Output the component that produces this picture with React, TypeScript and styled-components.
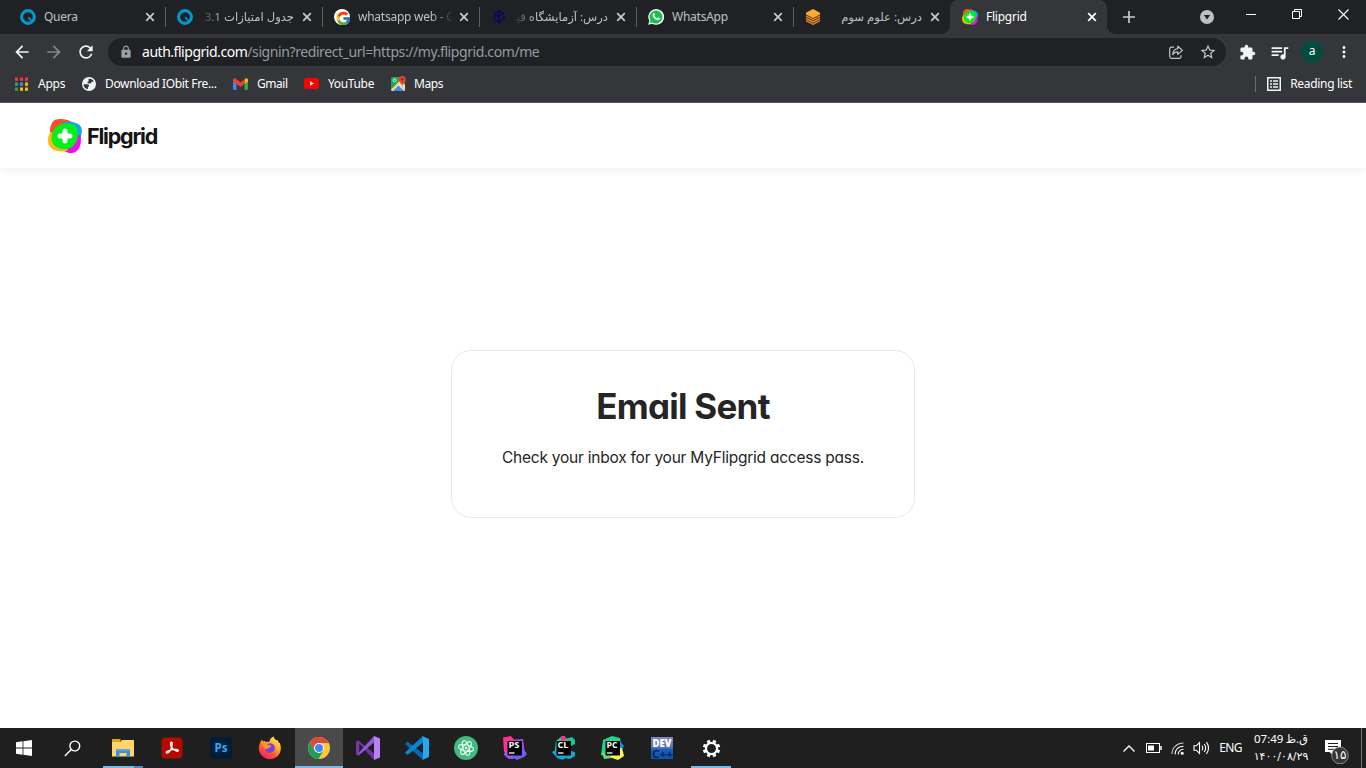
import React from "react";
import styled, { createGlobalStyle } from "styled-components";
import {
  MdArrowBack,
  MdArrowForward,
  MdRefresh,
  MdLock,
  MdStarBorder,
  MdExtension,
  MdQueueMusic,
  MdMoreVert,
} from "react-icons/md";
import { FcGoogle } from "react-icons/fc";

const GlobalStyle = createGlobalStyle`
  * { box-sizing: border-box; }
  html, body { margin: 0; padding: 0; overflow: hidden; background: #fff; }
  svg { display: block; flex: none; }
`;

const ui = `"Noto Sans", "Open Sans", "DejaVu Sans", sans-serif`;

const Screen = styled.div`
  width: 1366px;
  height: 768px;
  display: flex;
  flex-direction: column;
  font-family: ${ui};
  overflow: hidden;
`;

/* ---------- tab strip ---------- */

const TabStrip = styled.div`
  height: 34px;
  background: #202124;
  display: flex;
  padding-left: 8px;
`;

const Tab = styled.div<{ $active?: boolean; $divider?: boolean }>`
  position: relative;
  width: 157px;
  height: 34px;
  padding-left: 12px;
  display: flex;
  align-items: center;
  color: ${(p) => (p.$active ? "#fff" : "#bdc1c6")};
  background: ${(p) => (p.$active ? "#35363a" : "transparent")};
  border-radius: 8px 8px 0 0;
  ${(p) =>
    p.$divider &&
    `&::after { content: ""; position: absolute; right: -1px; top: 7px; width: 1px; height: 20px; background: #5a5c60; }`}
  ${(p) =>
    p.$active &&
    `&::before, &::after { content: ""; position: absolute; bottom: 0; width: 8px; height: 8px; }
     &::before { left: -8px; background: radial-gradient(circle at 0 0, #202124 7.5px, #35363a 8px); }
     &::after { right: -8px; background: radial-gradient(circle at 100% 0, #202124 7.5px, #35363a 8px); }`}
`;

const TabTitle = styled.div<{ $rtl?: boolean; $fade?: boolean }>`
  width: 94px;
  margin-left: 8px;
  padding-right: ${(p) => (p.$rtl ? 1 : 0)}px;
  display: flex;
  justify-content: ${(p) => (p.$rtl ? "flex-end" : "flex-start")};
  white-space: nowrap;
  font-size: ${(p) => (p.$rtl ? 11.6 : 12)}px;
  line-height: 18px;
  letter-spacing: ${(p) => (p.$rtl ? 0 : -0.25)}px;
  mask-image: ${(p) =>
    p.$fade
      ? `linear-gradient(to ${p.$rtl ? "left" : "right"}, #000 77%, transparent 102%)`
      : "none"};
`;

const CloseButton = styled.span`
  margin-left: 6px;
  display: flex;
`;

const NewTab = styled.div`
  width: 44px;
  display: flex;
  align-items: center;
  justify-content: center;
`;

const WindowControls = styled.div`
  margin-left: auto;
  display: flex;
`;

const ControlCell = styled.div<{ $w: number; $h?: number }>`
  width: ${(p) => p.$w}px;
  height: ${(p) => p.$h ?? 29}px;
  display: flex;
  align-items: center;
  justify-content: center;
`;

/* ---------- toolbar ---------- */

const Toolbar = styled.div`
  height: 34px;
  background: #35363a;
  display: flex;
  align-items: center;
  padding: 2px 0 0 12px;
  color: #f1f3f4;
`;

const NavButton = styled.span<{ $dim?: boolean }>`
  width: 32px;
  flex: none;
  display: flex;
  color: ${(p) => (p.$dim ? "#85868a" : "#f1f3f4")};
`;

const Omnibox = styled.div`
  width: 1118px;
  flex: none;
  height: 28px;
  border-radius: 14px;
  background: #202124;
  display: flex;
  align-items: center;
  padding: 0 9px 0 11px;
  color: #9aa0a6;
`;

const Url = styled.div`
  margin-left: 9px;
  flex: 1;
  font-size: 14px;
  line-height: 20px;
  letter-spacing: -0.41px;
  color: #969ba1;
  white-space: nowrap;
  b { font-weight: 400; color: #fff; letter-spacing: -0.47px; }
`;

const OmniActions = styled.div`
  display: flex;
  align-items: center;
  gap: 15px;
  color: #c4c7ca;
`;

const ToolActions = styled.div`
  display: flex;
  align-items: center;
  padding-left: 13px;
  gap: 13px;
`;

const Avatar = styled.span`
  width: 22px;
  height: 22px;
  border-radius: 50%;
  background: #004d40;
  font: 12px/20px ${ui};
  text-align: center;
  color: #fff;
  margin: 0 -1px 0 -2px;
`;

/* ---------- bookmarks ---------- */

const Bookmarks = styled.div`
  height: 35px;
  background: #35363a;
  border-bottom: 1px solid #5b5c5f;
  display: flex;
  align-items: center;
  padding: 0 14px 3px 15px;
  color: #fff;
  font-size: 12px;
`;

const Bookmark = styled.div<{ $w?: number; $track?: number; $gap?: number }>`
  display: flex;
  align-items: center;
  gap: ${(p) => p.$gap ?? 8}px;
  width: ${(p) => (p.$w ? p.$w + "px" : "auto")};
  white-space: nowrap;
  letter-spacing: ${(p) => p.$track ?? -0.25}px;
`;

const ReadingList = styled(Bookmark)`
  margin-left: auto;
  height: 16px;
  padding-left: 11px;
  border-left: 1px solid #6b6c70;
`;

/* ---------- page ---------- */

const Page = styled.div`
  flex: 1;
  display: flex;
  flex-direction: column;
  background: #fff;
  font-family: Inter, "Open Sans", sans-serif;
  font-feature-settings: "cv11", "ss03";
  color: #252525;
`;

const SiteHeader = styled.header`
  height: 65px;
  padding-left: 48px;
  display: flex;
  align-items: center;
  box-shadow: 0 2px 8px rgba(0, 0, 0, 0.06);
`;

const Wordmark = styled.span`
  margin-left: 5px;
  font-size: 21.5px;
  font-weight: 650;
  letter-spacing: -1.2px;
  line-height: 30px;
  color: #141414;
`;

const Main = styled.main`
  flex: 1;
  display: flex;
  justify-content: center;
  padding-top: 182px;
`;

const Card = styled.section`
  width: 464px;
  height: 168px;
  border: 1px solid #e8e8e8;
  border-radius: 20px;
  display: flex;
  flex-direction: column;
  align-items: center;
`;

const Title = styled.h1`
  margin: 32px 0 0;
  font-size: 35px;
  line-height: 46px;
  font-weight: 700;
  letter-spacing: -0.75px;
  white-space: nowrap;
`;

const Message = styled.p`
  margin: 17px 0 0;
  font-size: 15.5px;
  line-height: 24px;
  letter-spacing: -0.23px;
  white-space: nowrap;
`;

/* ---------- taskbar ---------- */

const Taskbar = styled.footer`
  height: 40px;
  background: #1f1f1f;
  display: flex;
  color: #fff;
`;

const SystemSlot = styled.div`
  width: 48px;
  display: flex;
  align-items: center;
  justify-content: center;
`;

const AppList = styled.div`
  display: flex;
  gap: 1px;
  padding-left: 3px;
`;

const AppSlot = styled.div<{ $state?: "open" | "focused" | "grouped" }>`
  position: relative;
  width: 48px;
  height: 40px;
  display: flex;
  align-items: center;
  justify-content: center;
  background: ${(p) => (p.$state === "focused" ? "#4a4a4a" : "transparent")};
  ${(p) =>
    p.$state &&
    `&::after { content: ""; position: absolute; bottom: 0; height: 2px;
      left: ${p.$state === "focused" ? 0 : 4}px; right: ${p.$state === "focused" ? 0 : 4}px;
      background: ${p.$state === "grouped" ? "linear-gradient(to right, #76b9ed 31px, #4f86b5 31px)" : "#76b9ed"}; }`}
`;

const Tray = styled.div`
  margin-left: auto;
  display: flex;
  align-items: center;
`;

const TrayItem = styled.div<{ $w: number }>`
  width: ${(p) => p.$w}px;
  display: flex;
  justify-content: center;
`;

const Language = styled.div`
  width: 27px;
  margin-left: 4px;
  font-size: 12px;
  line-height: 16px;
  letter-spacing: -0.6px;
  text-align: center;
`;

const Clock = styled.div`
  width: 73px;
  padding-left: 1px;
  display: flex;
  flex-direction: column;
  align-items: center;
  font-size: 12px;
  line-height: 18px;
  white-space: nowrap;
`;

const TimeText = styled.span`
  font-size: 11.5px;
  word-spacing: -1px;
  letter-spacing: -0.85px;
`;

const PersianDate = styled.span`
  font: 11px/18px "DejaVu Sans", sans-serif;
  letter-spacing: -0.75px;
`;

const Notifications = styled.div`
  width: 44px;
  height: 40px;
  padding: 10px 0 0 8px;
`;

const ShowDesktop = styled.div`
  width: 5px;
  height: 40px;
  border-left: 1px solid #747474;
`;

/* ---------- drawings ---------- */

const QueraIcon = () => (
  <svg width="16" height="16" viewBox="0 0 16 16">
    <circle cx="8" cy="8" r="6.4" fill="none" stroke="#0099cc" strokeWidth="3.1" />
    <path d="M8.200 8.400l3.600 3.600" stroke="#0099cc" strokeWidth="1.700" />
  </svg>
);

const GoogleTabIcon = () => (
  <svg width="16" height="16" viewBox="0 0 16 16">
    <circle cx="8" cy="8" r="8" fill="#fff" />
    <FcGoogle x="1.5" y="1.5" width="13" height="13" />
  </svg>
);

const CrestIcon = () => (
  <svg width="16" height="16" viewBox="0 0 16 16" fill="none" stroke="#08085e">
    <circle cx="8" cy="7.500" r="4.900" strokeWidth="2" strokeDasharray="2.300 .6" />
    <path d="M8 .8v14.600" strokeWidth="1.500" />
    <path d="M5 6.300c2 0 3 1.500 3 4 0-2.500 1-4 3-4" strokeWidth="1.200" />
  </svg>
);

const WhatsAppIcon = () => (
  <svg width="16" height="16" viewBox="0 0 16 16">
    <path d="M.2 15.800l1.100-4A7.900 7.900 0 1 1 4.300 14.800z" fill="#fff" />
    <path d="M1.700 14.300l.8-2.800A6.500 6.500 0 1 1 4.500 13.500z" fill="#17c14b" />
    <path d="M5.300 4.300c.7-.6 1.100-.3 1.300.3l.4 1c.1.4-.5.8-.6 1.100.6 1.200 1.500 2 2.700 2.500.4-.1.7-.9 1.100-.8l1.400.7c.4.4-.1 1.600-.9 1.900-2.800.7-6.500-3-6.100-5.600.1-.4.3-.8.7-1.100z" fill="#fff" />
  </svg>
);

const StackIcon = () => (
  <svg width="16" height="16" viewBox="0 0 16 16">
    <path d="M1 4l7 3.500L15 4v8l-7 4-7-4z" fill="#6b4118" />
    <path d="M8 0l7 3.800v1.400L8 9 1 5.200V3.800z" fill="#ffab30" />
    <path d="M1 7l7 3.700L15 7M1 9.400l7 3.700 7-3.700M1 11.800l7 3.600 7-3.600" fill="none" stroke="#e8902b" strokeWidth="1.100" />
  </svg>
);

const FlipgridIcon = ({ size }: { size: number }) => (
  <svg width={size} height={size} viewBox="0 0 34 34">
    <path d="M2 12C2.500 4 5 .5 10 .2c6-.5 12 1 15 4l-8 12L3 19z" fill="#f5512c" />
    <path d="M14 4c5-2 10-1.500 14 0 5 2 6.300 5 5.700 9.500-.5 5-2 9-5 12L15 22z" fill="#14a3f2" />
    <path d="M32.500 17c1 5 .3 10.500-2.700 14-3.500 4-9.500 3.800-14.300.8l-2-6 14-10z" fill="#f00df0" />
    <path d="M2.500 13C-.8 18-.8 24.500 2.500 28.200c4 4.300 11 5.100 17 3.500L18 17z" fill="#ffb60d" />
    <path d="M7 9.500C10 5 16 4 21.500 4.600c6.300 1 9 5 8.500 11-.5 6-2.500 10-6.500 13-5 2.800-12.500 2-16.800-1.800C2 22 3 14.500 7 9.500z" fill="#00f018" />
    <path d="M17 12v10M12 17h10" stroke="#fff" strokeWidth="5" strokeLinecap="round" />
    <circle cx="17" cy="17" r="3.600" fill="#fff" />
  </svg>
);

const Cross = ({ color }: { color: string }) => (
  <svg width="12" height="12" viewBox="0 0 12 12">
    <path d="M2.200 2.200l7.600 7.600M9.800 2.200L2.200 9.800" stroke={color} strokeWidth="1.700" />
  </svg>
);

const AppsIcon = () => {
  const colors = ["#f23b34", "#f23b34", "#f23b34", "#22a565", "#4285f4", "#fbbc05", "#22a565", "#fbbc05", "#fbbc05"];
  return (
    <svg width="13" height="14" viewBox="0 0 13 14">
      {colors.map((c, i) => (
        <rect key={i} x={(i % 3) * 5} y={Math.floor(i / 3) * 5 + 0.5} width="3" height="3.300" fill={c} />
      ))}
    </svg>
  );
};

const GlobeIcon = () => (
  <svg width="14" height="14" viewBox="0 0 16 16">
    <circle cx="8" cy="8" r="8" fill="#f1f3f4" />
    <path d="M1.800 8.200h4.400c2.400.2 2.600 2.600.6 3.200v2.400C4 13.600 1.800 11.500 1.800 8.200zM7.500 2.200c3-.4 5 1 6 3.300H11c-.4 2-1.600 2.200-3.600 2C5.800 7.200 5.700 5.300 7.500 5z" fill="#35363a" />
  </svg>
);

const GmailIcon = () => (
  <svg width="15" height="12" viewBox="0 0 15 12">
    <path d="M0 2v8.500Q0 12 1.500 12h2V4.500z" fill="#4285f4" />
    <path d="M15 2v8.500Q15 12 13.500 12h-2V4.500z" fill="#34a853" />
    <path d="M11.500 1.400L13 .3Q15 0 15 2v1.500L11.500 6z" fill="#fbbc04" />
    <path d="M0 3.500V2Q0 0 2 .3l5.500 4 4-2.900V6l-4 3z" fill="#ea4335" />
  </svg>
);

const YouTubeIcon = () => (
  <svg width="15" height="11" viewBox="0 0 15 11">
    <rect width="15" height="11" rx="2.500" fill="#f00" />
    <path d="M6 3.200v4.600l3.800-2.300z" fill="#fff" />
  </svg>
);

const MapsIcon = () => (
  <svg width="15" height="15" viewBox="0 0 15 15">
    <rect y="1" width="14" height="14" rx="1.500" fill="#1fa463" />
    <path d="M0 13.500L9 5l5 4v5.500l-2 .5H1z" fill="#e6e6e6" />
    <path d="M2 15l5.500-5.500L13 15z" fill="#4285f4" />
    <path d="M1 14L9 5.500 13.500 14" stroke="#ffd04b" strokeWidth="1.800" fill="none" />
    <circle cx="3.600" cy="4.400" r="1.500" fill="none" stroke="#fff" strokeWidth=".8" />
    <path d="M11.200 10.500C11 7.500 7.800 6.500 7.800 3.500a3.500 3.500 0 0 1 7 0c0 3-3.200 4-3.600 7z" fill="#ea4335" />
    <circle cx="11.300" cy="3.400" r="1.200" fill="#8c1d18" />
  </svg>
);

const ShareIcon = () => (
  <svg width="16" height="16" viewBox="0 0 16 16" fill="none" stroke="currentColor" strokeWidth="1.200">
    <path d="M6 3.200H3.500Q1.700 3.200 1.700 5v7.500q0 1.800 1.800 1.800h7.800q1.700 0 1.700-1.800v-1.300" />
    <path d="M9.800 2.200l4.700 4.200-4.700 4V7.900C7.500 7.800 6 8.600 4.700 10.600 4.900 7.300 6.500 5 9.800 4.600z" strokeLinejoin="round" />
  </svg>
);

const ReadingListIcon = () => (
  <svg width="14" height="14" viewBox="0 0 14 14">
    <rect x=".75" y=".75" width="12.500" height="12.500" fill="none" stroke="#f1f3f4" strokeWidth="1.500" />
    <path d="M3 4h2M6 4h5M3 7h2M6 7h5M3 10h2M6 10h5" stroke="#f1f3f4" strokeWidth="1.600" />
  </svg>
);

const FolderIcon = () => (
  <svg width="22" height="18" viewBox="0 0 22 18">
    <path d="M0 0h8.500v3H0z" fill="#e9a20c" />
    <path d="M0 3h8.500L10 1h12v16.500H0z" fill="#ffd767" />
    <path d="M4 18v-8h14v8h-3.500v-4h-7v4z" fill="#3a8fd9" />
    <path d="M4 10h14v2H4z" fill="#56a8e8" />
  </svg>
);

const AcrobatIcon = () => (
  <svg width="22" height="22" viewBox="0 0 22 22">
    <rect x=".5" y=".5" width="21" height="21" rx="4" fill="#b30b00" />
    <path d="M10.600 10.500c-1.100-2-1.600-4.700-.4-5.300 1.500-.4 1.100 3 .4 5.300-1 2.600-3.300 5.800-5 5.500-1.200-.6.500-2.400 4.400-3.100 3.500-.8 7.600-.7 7.400.8-.3 1.400-3.700-.1-6.800-3.200z" fill="none" stroke="#fff" strokeWidth="1.300" />
  </svg>
);

const PhotoshopIcon = () => (
  <svg width="22" height="22" viewBox="0 0 22 22">
    <rect width="22" height="22" rx="4" fill="#001e36" />
    <text x="11" y="15" textAnchor="middle" fontFamily="Open Sans" fontSize="11.500" fontWeight="700" fill="#31a8ff">Ps</text>
  </svg>
);

const FirefoxIcon = () => (
  <svg width="24" height="24" viewBox="0 0 24 24">
    <defs>
      <linearGradient id="fx" x1=".8" y1="0" x2=".2" y2="1">
        <stop offset="0" stopColor="#fff04a" />
        <stop offset=".4" stopColor="#ffa12b" />
        <stop offset=".7" stopColor="#ff4b3a" />
        <stop offset="1" stopColor="#ef1676" />
      </linearGradient>
    </defs>
    <path d="M4 3.500l1 2 2-.8L7.500 6l4-.5C12 3 13.500 1.200 15.500.5c.5 2 1.500 2.500 3 4l.5-.8c1 1 1.500 2 2 3.500l.6-.7C22.600 9 23 10.500 22.800 13 22.300 19 17.600 23.300 12 23.300S1.300 18.700.8 13C.6 9.500 2 6 4 3.500z" fill="url(#fx)" />
    <path d="M8 9.500c2-3 7-3 8.500.5 1.300 3.500-.8 6.800-4.500 6.800-3 0-5-2-4.800-4.600l3.200.1 2.400-2z" fill="#7542e5" />
    <path d="M4 9c2-1.500 5-1 6.500.2 1.500.2 2.500.2 3 .8L10 12.500 7.500 13z" fill="#ff9a24" />
  </svg>
);

const ChromeIcon = () => (
  <svg width="22" height="22" viewBox="0 0 22 22">
    <circle cx="11" cy="11" r="11" fill="#fbc93b" />
    <path d="M11 0A11 11 0 0 1 20.700 6H11L6.500 13.500 1.500 5.500A11 11 0 0 1 11 0z" fill="#dd4b3e" />
    <path d="M1.500 5.500L6.700 13.600 11 16l4.500-2.500L10.500 22A11 11 0 0 1 1.500 5.500z" fill="#1c9f5a" />
    <circle cx="11" cy="11" r="5" fill="#fff" />
    <circle cx="11" cy="11" r="4" fill="#4285f4" />
  </svg>
);

const VisualStudioIcon = () => (
  <svg width="24" height="24" viewBox="0 0 24 24">
    <path d="M0 6l2.500-1.500L18 17.500V24L3 7.500v9L2.500 19.500 0 18z" fill="#6b33a8" />
    <path d="M0 18l2.500 1.500L18 6.500V0L3 16.500z" fill="#9457d6" />
    <path d="M18 0l6 2.500v19L18 24z" fill="#b681f7" />
    <path d="M0 6l2.500-1.500.8 3v9l-.8 3L0 18z" fill="#713ab0" />
  </svg>
);

const VSCodeIcon = () => (
  <svg width="24" height="24" viewBox="0 0 24 24">
    <path d="M0 8l2.500-2.500L18 17.500V24z" fill="#0069b8" />
    <path d="M0 16.500L2.500 19 18 6.500V0z" fill="#0b86d0" />
    <path d="M17 0l7 3v18l-7 3 1-1.500v-21z" fill="#27a6f2" />
  </svg>
);

const AtomIcon = () => (
  <svg width="24" height="24" viewBox="0 0 24 24" fill="none">
    <circle cx="12" cy="12" r="12" fill="#43b881" />
    <g stroke="#e8fff4" strokeWidth="1">
      <ellipse cx="12" cy="12" rx="7.700" ry="3" transform="rotate(12 12 12)" />
      <ellipse cx="12" cy="12" rx="7.700" ry="3" transform="rotate(72 12 12)" />
      <ellipse cx="12" cy="12" rx="7.700" ry="3" transform="rotate(128 12 12)" />
    </g>
    <circle cx="12" cy="12" r="1.200" fill="#fff" />
  </svg>
);

type Facet = { d: string; fill: string };

const phpStormFacets: Facet[] = [
  { d: "M5 4L20 3l2 15-13 5-7-4z", fill: "#a24df5" },
  { d: "M0 1.500L8 0l4 5-7 12-4-1z", fill: "#ff318c" },
  { d: "M2 15l5-2 5 9-6 1-5-4z", fill: "#b050f2" },
  { d: "M19 11l5 7-3 3-7 3-5-3z", fill: "#6f5bff" },
];

const clionFacets: Facet[] = [
  { d: "M4 5l5-4 8 2-4 20-8-3-2-6z", fill: "#21d789" },
  { d: "M9 0h4l2 4-6 1z", fill: "#ed358c" },
  { d: "M14 3l6-2 3 3v4l-4 2z", fill: "#16c79a" },
  { d: "M0 16l5-3 8 7-2 4-6-2zM19 15l4 1v4l-5 3-6-1z", fill: "#0fa7d9" },
];

const pyCharmFacets: Facet[] = [
  { d: "M2 4l9-4 8 2 1 5-9 15-11-3z", fill: "#21d789" },
  { d: "M19 5l4 5-2 4-4-2z", fill: "#0f8fe0" },
  { d: "M21 12l2 8-6 4-9-3 8-8z", fill: "#fcf84a" },
  { d: "M1 17l5-1 5 6-8 1z", fill: "#5fdf7c" },
];

const JetBrainsIcon = ({ label, facets }: { label: string; facets: Facet[] }) => (
  <svg width="24" height="24" viewBox="0 0 24 24">
    {facets.map((f) => (
      <path key={f.d} d={f.d} fill={f.fill} />
    ))}
    <rect x="4.500" y="5" width="14.500" height="14.500" fill="#000" />
    <text x="5.500" y="12" fontFamily="Open Sans" fontSize="8.500" fontWeight="700" fill="#fff" textLength="11" lengthAdjust="spacingAndGlyphs">{label}</text>
    <path d="M6 17h5.500" stroke="#fff" strokeWidth="1.300" />
  </svg>
);

const DevCppIcon = () => (
  <svg width="22" height="22" viewBox="0 0 22 22">
    <defs>
      <linearGradient id="dev" x1="0" y1="0" x2="0" y2="1">
        <stop offset="0" stopColor="#8188b8" />
        <stop offset=".5" stopColor="#5b6fb4" />
        <stop offset=".56" stopColor="#1460bd" />
        <stop offset="1" stopColor="#0c55b0" />
      </linearGradient>
    </defs>
    <rect width="22" height="22" fill="url(#dev)" />
    <text x="1" y="20.500" fontFamily="Open Sans" fontSize="11" fontWeight="700" fill="#06234f" textLength="21" lengthAdjust="spacingAndGlyphs">C++</text>
    <text x="1.500" y="10" fontFamily="Open Sans" fontSize="10" fontWeight="800" fill="#fff" textLength="19" lengthAdjust="spacingAndGlyphs">DEV</text>
  </svg>
);

const SettingsIcon = () => (
  <svg width="19" height="19" viewBox="0 0 20 20" fill="none" stroke="#fff">
    <circle cx="10" cy="10" r="5.800" strokeWidth="2.200" />
    {[0, 45, 90, 135, 180, 225, 270, 315].map((a) => (
      <path key={a} d="M10 .8v3" strokeWidth="3.400" transform={`rotate(${a + 22.5} 10 10)`} />
    ))}
  </svg>
);

const StartIcon = () => (
  <svg width="16" height="16" viewBox="0 0 16 16" fill="#fff">
    <path d="M0 2.300L6.600 1.300v6.300H0zM7.400 1.200L16 0v7.600H7.400zM0 8.400h6.600v6.300L0 13.700zM7.400 8.400H16V16l-8.600-1.200z" />
  </svg>
);

const SearchIcon = () => (
  <svg width="17" height="17" viewBox="0 0 17 17" fill="none" stroke="#fff" strokeWidth="1.400">
    <circle cx="10.800" cy="6" r="4.900" />
    <path d="M7.300 9.500L.8 16" />
  </svg>
);

const BatteryIcon = () => (
  <svg width="16" height="10" viewBox="0 0 16 10">
    <rect x=".5" y=".5" width="13" height="9" fill="none" stroke="#fff" />
    <rect x="2" y="2.500" width="6" height="5" fill="#fff" />
    <path d="M15 3v4" stroke="#fff" strokeWidth="1.500" />
  </svg>
);

const WifiIcon = () => (
  <svg width="14" height="13" viewBox="0 0 14 13" fill="none" stroke="#fff" strokeWidth="1.100">
    <path d="M1 12C1 5.500 6 1 12.500 1" opacity=".75" />
    <path d="M4 12.500c0-5 3.700-8.300 8.500-8.300M7.200 12.500c0-3 2.200-5.200 5.300-5.200" />
    <circle cx="11.200" cy="11.200" r="1.500" fill="#fff" stroke="none" />
  </svg>
);

const VolumeIcon = () => (
  <svg width="17" height="14" viewBox="0 0 17 14" fill="none" stroke="#fff" strokeWidth="1.100">
    <path d="M1 4.800h2.300L6.500 1.500v11L3.300 9.200H1z" />
    <path d="M9 4.800q1.600 2.200 0 4.400M11.200 3q3 4 0 8M13.400 1.200q4.300 5.800 0 11.600" />
  </svg>
);

const NotificationIcon = () => (
  <svg width="28" height="26" viewBox="0 0 28 26">
    <path d="M0 2h16v12H8v3.500L4.500 14H0z" fill="#fff" />
    <path d="M3 5.500h10M3 8.500h10M3 11.300h6" stroke="#1f1f1f" strokeWidth="1" />
    <circle cx="15" cy="17.500" r="8.300" fill="#353535" stroke="#8b8b8b" />
    <text x="15" y="21.300" textAnchor="middle" fontFamily="DejaVu Sans" fontSize="12" fill="#fff">۱۵</text>
  </svg>
);

type TabData = { icon: React.ReactNode; title: string; rtl?: boolean; fade?: boolean; active?: boolean };

const tabs: TabData[] = [
  { icon: <QueraIcon />, title: "Quera" },
  { icon: <QueraIcon />, title: "جدول امتیازات 3.1", rtl: true, fade: true },
  { icon: <GoogleTabIcon />, title: "whatsapp web - G", fade: true },
  { icon: <CrestIcon />, title: "درس: آزمایشگاه فیز", rtl: true, fade: true },
  { icon: <WhatsAppIcon />, title: "WhatsApp" },
  { icon: <StackIcon />, title: "درس: علوم سوم", rtl: true },
  { icon: <FlipgridIcon size={16} />, title: "Flipgrid", active: true },
];

export default function App() {
  return (
    <Screen>
      <GlobalStyle />
      <TabStrip>
        {tabs.map((t, i) => (
          <Tab key={i} $active={t.active} $divider={i < 5}>
            {t.icon}
            <TabTitle $rtl={t.rtl} $fade={t.fade}>
              <span dir={t.rtl ? "rtl" : "ltr"}>{t.title}</span>
            </TabTitle>
            <CloseButton>
              <Cross color={t.active ? "#fff" : "#c8cacd"} />
            </CloseButton>
          </Tab>
        ))}
        <NewTab>
          <svg width="12" height="12" viewBox="0 0 12 12">
            <path d="M6 0v12M0 6h12" stroke="#c8cacd" strokeWidth="1.700" />
          </svg>
        </NewTab>
        <WindowControls>
          <ControlCell $w={42} $h={34}>
            <svg width="14" height="14" viewBox="0 0 14 14">
              <circle cx="7" cy="7" r="7" fill="#bdc1c6" />
              <path d="M3.800 5h6.400L7 9.500z" fill="#202124" />
            </svg>
          </ControlCell>
          <ControlCell $w={46}>
            <svg width="10" height="1"><rect width="10" height="1" fill="#fff" /></svg>
          </ControlCell>
          <ControlCell $w={46} $h={28}>
            <svg width="10" height="10" viewBox="0 0 10 10" fill="none" stroke="#fff">
              <path d="M.5 2.500h7v7h-7zM2.500 2.500v-2h7v7h-2" />
            </svg>
          </ControlCell>
          <ControlCell $w={46} $h={28}>
            <svg width="11" height="11" viewBox="0 0 11 11">
              <path d="M.5.5l10 10M10.500.5l-10 10" stroke="#fff" strokeWidth="1.100" />
            </svg>
          </ControlCell>
        </WindowControls>
      </TabStrip>

      <Toolbar>
        <NavButton><MdArrowBack size={20} /></NavButton>
        <NavButton $dim><MdArrowForward size={20} /></NavButton>
        <NavButton><MdRefresh size={20} /></NavButton>
        <Omnibox>
          <MdLock size={14} />
          <Url><b>auth.flipgrid.com</b>/signin?redirect_url=https://my.flipgrid.com/me</Url>
          <OmniActions>
            <ShareIcon />
            <MdStarBorder size={18} />
          </OmniActions>
        </Omnibox>
        <ToolActions>
          <MdExtension size={17} />
          <MdQueueMusic size={21} />
          <Avatar>a</Avatar>
          <MdMoreVert size={18} />
        </ToolActions>
      </Toolbar>

      <Bookmarks>
        <Bookmark $w={67} $gap={10} $track={-0.25}><AppsIcon />Apps</Bookmark>
        <Bookmark $w={151} $gap={9} $track={-0.35}><GlobeIcon />Download IObit Fre...</Bookmark>
        <Bookmark $w={71} $gap={9} $track={-0.45}><GmailIcon />Gmail</Bookmark>
        <Bookmark $w={87} $gap={9} $track={-0.35}><YouTubeIcon />YouTube</Bookmark>
        <Bookmark $track={-0.4}><MapsIcon />Maps</Bookmark>
        <ReadingList $gap={9} $track={-0.32}><ReadingListIcon />Reading list</ReadingList>
      </Bookmarks>

      <Page>
        <SiteHeader>
          <FlipgridIcon size={34} />
          <Wordmark>Flipgrid</Wordmark>
        </SiteHeader>
        <Main>
          <Card>
            <Title>Email Sent</Title>
            <Message>Check your inbox for your MyFlipgrid access pass.</Message>
          </Card>
        </Main>
      </Page>

      <Taskbar>
        <SystemSlot><StartIcon /></SystemSlot>
        <SystemSlot><SearchIcon /></SystemSlot>
        <AppList>
          <AppSlot $state="grouped"><FolderIcon /></AppSlot>
          <AppSlot><AcrobatIcon /></AppSlot>
          <AppSlot><PhotoshopIcon /></AppSlot>
          <AppSlot><FirefoxIcon /></AppSlot>
          <AppSlot $state="focused"><ChromeIcon /></AppSlot>
          <AppSlot><VisualStudioIcon /></AppSlot>
          <AppSlot><VSCodeIcon /></AppSlot>
          <AppSlot><AtomIcon /></AppSlot>
          <AppSlot><JetBrainsIcon label="PS" facets={phpStormFacets} /></AppSlot>
          <AppSlot><JetBrainsIcon label="CL" facets={clionFacets} /></AppSlot>
          <AppSlot><JetBrainsIcon label="PC" facets={pyCharmFacets} /></AppSlot>
          <AppSlot><DevCppIcon /></AppSlot>
          <AppSlot $state="open"><SettingsIcon /></AppSlot>
        </AppList>
        <Tray>
          <TrayItem $w={24}>
            <svg width="12" height="7" viewBox="0 0 12 7" fill="none" stroke="#fff" strokeWidth="1.300">
              <path d="M.5 6.500L6 1l5.500 5.500" />
            </svg>
          </TrayItem>
          <TrayItem $w={25}><BatteryIcon /></TrayItem>
          <TrayItem $w={24}><WifiIcon /></TrayItem>
          <TrayItem $w={23}><VolumeIcon /></TrayItem>
          <Language>ENG</Language>
          <Clock>
            <TimeText dir="ltr">07:49 ق.ظ</TimeText>
            <PersianDate dir="ltr">۱۴۰۰/۰۸/۲۹</PersianDate>
          </Clock>
          <Notifications><NotificationIcon /></Notifications>
          <ShowDesktop />
        </Tray>
      </Taskbar>
    </Screen>
  );
}
